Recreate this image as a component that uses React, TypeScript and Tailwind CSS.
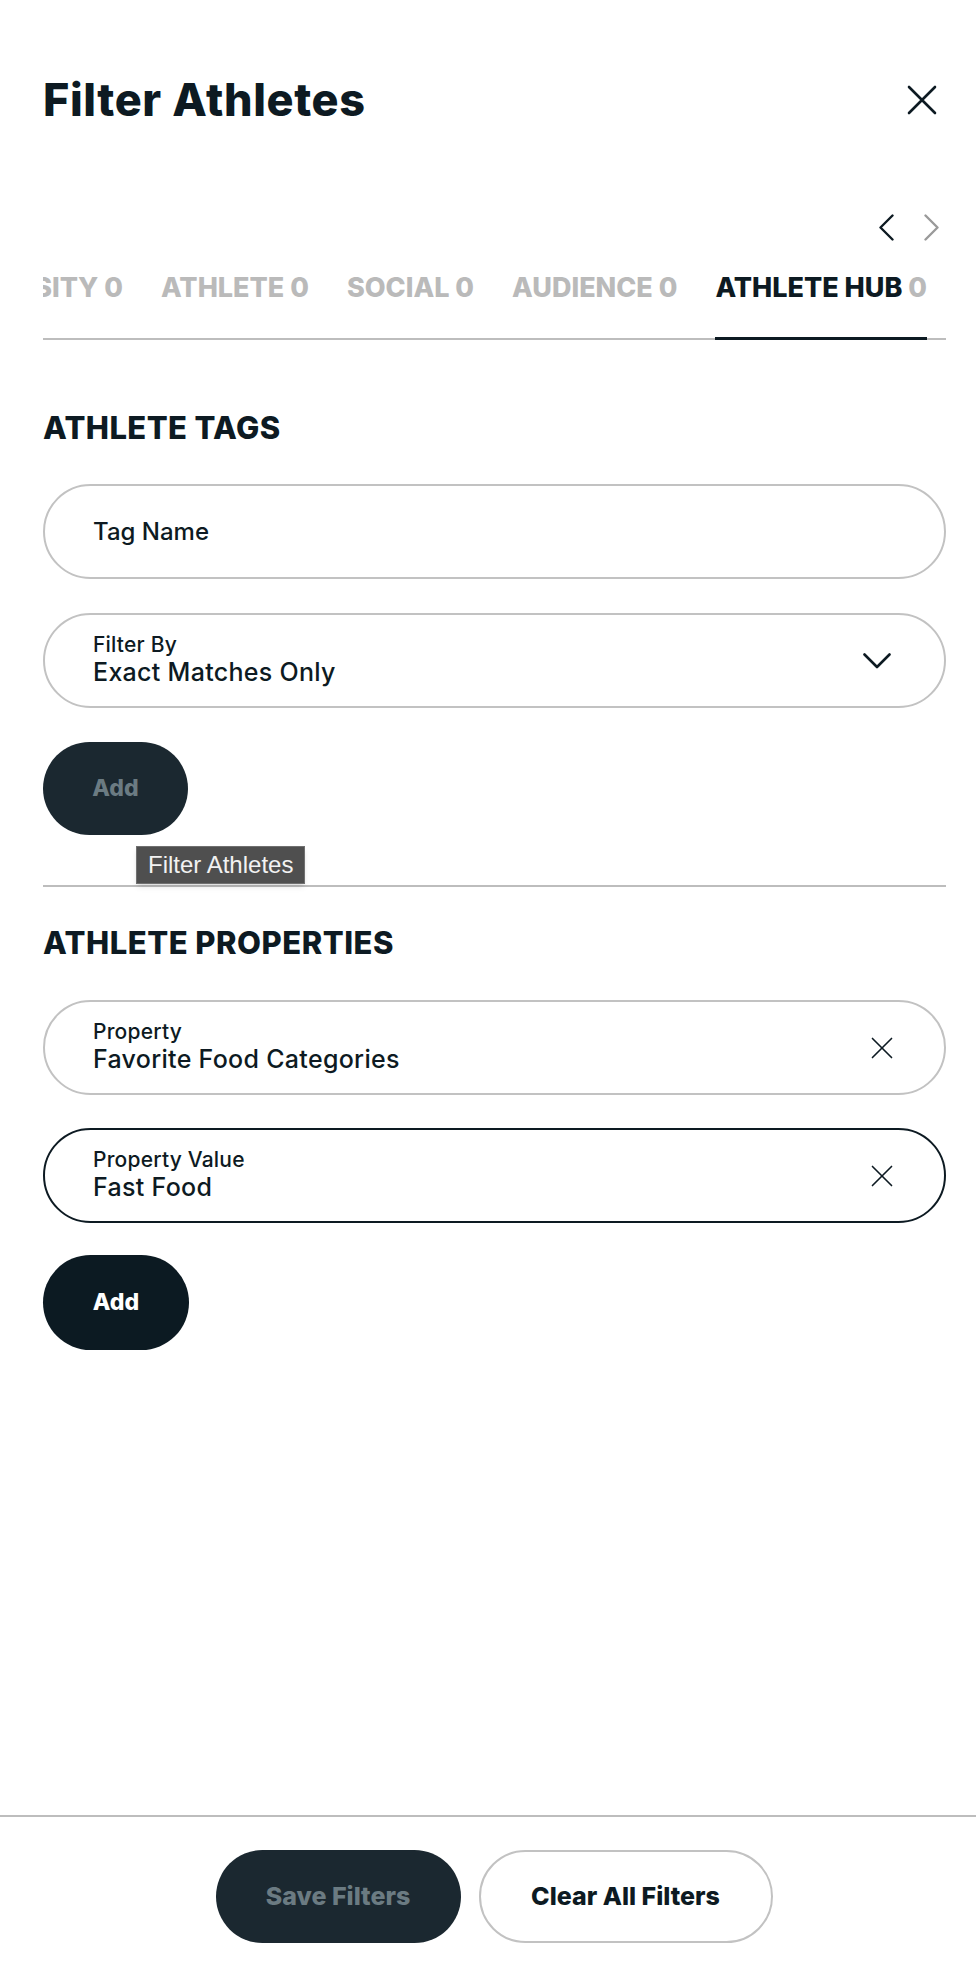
import { useState } from 'react';

const tabs = [
  { label: 'UNIVERSITY', count: 0 },
  { label: 'ATHLETE', count: 0 },
  { label: 'SOCIAL', count: 0 },
  { label: 'AUDIENCE', count: 0 },
  { label: 'ATHLETE HUB', count: 0 },
];

const CloseIcon = ({ size = 30, stroke = 2.6 }: { size?: number; stroke?: number }) => (
  <svg width={size} height={size} viewBox="0 0 30 30" fill="none">
    <path d="M2 2 28 28M28 2 2 28" stroke="currentColor" strokeWidth={stroke} strokeLinecap="round" />
  </svg>
);

const Chevron = ({ dir }: { dir: 'left' | 'right' | 'down' }) => {
  if (dir === 'down') {
    return (
      <svg width="28" height="16" viewBox="0 0 28 16" fill="none">
        <path d="M1.5 1.5 14 14 26.5 1.5" stroke="currentColor" strokeWidth="2.6" strokeLinecap="round" strokeLinejoin="round" />
      </svg>
    );
  }
  return (
    <svg width="15" height="27" viewBox="0 0 15 27" fill="none">
      <path
        d={dir === 'left' ? 'M13.5 1.5 1.5 13.5 13.5 25.5' : 'M1.5 1.5 13.5 13.5 1.5 25.5'}
        stroke="currentColor"
        strokeWidth="2.4"
        strokeLinecap="round"
        strokeLinejoin="round"
      />
    </svg>
  );
};

type FieldProps = {
  label?: string;
  value: string;
  active?: boolean;
  trailing?: React.ReactNode;
};

const Field = ({ label, value, active, trailing }: FieldProps) => (
  <div
    className={`flex h-[95px] items-center justify-between rounded-full border-2 pl-[48px] pr-[51px] ${
      active ? 'border-[#0d1a22]' : 'border-[#c2c2c2]'
    }`}
  >
    {label ? (
      <div className="flex flex-col">
        <span className="text-[21px] font-medium leading-[24px] tracking-[0.2px] text-[#0d1a22]">{label}</span>
        <span className="text-[25px] font-medium leading-[31px] tracking-[0.3px] text-[#0d1a22]">{value}</span>
      </div>
    ) : (
      <span className="text-[24px] font-medium text-[#0d1a22]">{value}</span>
    )}
    {trailing}
  </div>
);

export default function App() {
  const [activeTab] = useState(4);

  return (
    <div className="flex h-[1978px] flex-col bg-white font-['Inter',sans-serif] text-[#0d1a22]">
      <div className="flex-1 pl-[43px] pr-[30px] pt-[77px]">
        {/* Header */}
        <div className="flex items-center justify-between">
          <h1 className="text-[45px] font-extrabold leading-none tracking-[0.6px]">Filter Athletes</h1>
          <button className="mr-[9px] text-[#0d1a22]">
            <CloseIcon />
          </button>
        </div>

        {/* Tab scroller */}
        <div className="mt-[92px] flex justify-end gap-[30px] pr-[7px]">
          <button className="text-[#0d1a22]">
            <Chevron dir="left" />
          </button>
          <button className="text-[#9a9a9a]">
            <Chevron dir="right" />
          </button>
        </div>

        <div className="mt-[33px] grid">
          <div className="col-start-1 row-start-1 h-[2px] self-end bg-[#bdbdbd]" />
          <div className="col-start-1 row-start-1 flex justify-end gap-[38px] overflow-hidden pr-[19px]">
            {tabs.map((tab, i) => (
              <div
                key={tab.label}
                className={`shrink-0 whitespace-nowrap pb-[36px] text-[27px] font-extrabold leading-none ${
                  i === activeTab ? 'border-b-[3px] border-[#0d1a22] text-[#0d1a22]' : 'border-b-[3px] border-transparent text-[#bababa]'
                }`}
              >
                {tab.label} <span className="text-[#bababa]">{tab.count}</span>
              </div>
            ))}
          </div>
        </div>

        {/* Athlete tags */}
        <h2 className="mt-[72px] text-[31px] font-extrabold leading-none tracking-[0.4px]">ATHLETE TAGS</h2>
        <div className="mt-[41px] flex flex-col gap-[34px]">
          <Field value="Tag Name" />
          <Field
            label="Filter By"
            value="Exact Matches Only"
            trailing={
              <span className="mr-[2px] text-[#0d1a22]">
                <Chevron dir="down" />
              </span>
            }
          />
        </div>

        <div className="relative mt-[34px] w-[145px]">
          <button className="h-[93px] w-[145px] rounded-full bg-[#1b2830] text-[23px] font-extrabold text-[#6b7b82]">
            Add
          </button>
          <div className="absolute left-[93px] top-[104px] z-10 whitespace-nowrap border border-[#707070] bg-[#4f4f4f] px-[11px] py-[4px] font-['Liberation_Sans',sans-serif] text-[24px] leading-[28px] text-[#f2f2f2] shadow-md">
            Filter Athletes
          </div>
        </div>

        <div className="mt-[50px] h-[2px] bg-[#bdbdbd]" />

        {/* Athlete properties */}
        <h2 className="mt-[40px] text-[31px] font-extrabold leading-none tracking-[0.5px]">ATHLETE PROPERTIES</h2>
        <div className="mt-[42px] flex flex-col gap-[33px]">
          <Field label="Property" value="Favorite Food Categories" trailing={<CloseIcon size={22} stroke={2.2} />} />
          <Field label="Property Value" value="Fast Food" active trailing={<CloseIcon size={22} stroke={2.2} />} />
        </div>

        <button className="mt-[32px] h-[95px] w-[146px] rounded-full bg-[#0c1a22] text-[23px] font-extrabold text-white">
          Add
        </button>
      </div>

      {/* Footer actions */}
      <div className="border-t-2 border-[#bdbdbd] pb-[35px] pt-[33px]">
        <div className="flex justify-center gap-[18px] pl-[12px]">
          <button className="h-[93px] w-[245px] rounded-full bg-[#1b2830] text-[25px] font-extrabold text-[#6b7b82]">
            Save Filters
          </button>
          <button className="h-[93px] w-[294px] rounded-full border-2 border-[#c2c2c2] bg-white text-[25px] font-extrabold text-[#0d1a22]">
            Clear All Filters
          </button>
        </div>
      </div>
    </div>
  );
}
